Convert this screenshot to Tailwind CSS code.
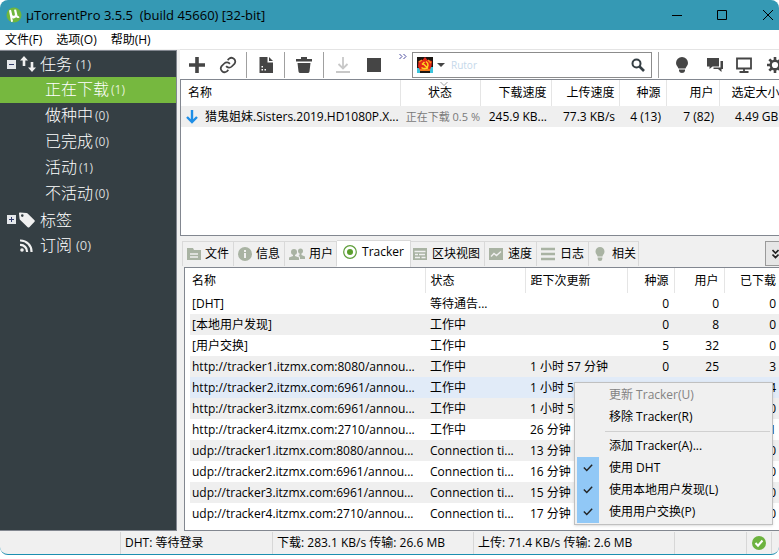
<!DOCTYPE html>
<html lang="zh-CN">

<head>
  <meta charset="UTF-8" />
  <meta name="viewport" content="width=device-width, initial-scale=1.0" />
  <title>μTorrentPro 3.5.5</title>
  <script src="https://cdn.jsdelivr.net/npm/@tailwindcss/browser@4"></script>
</head>
<body class="h-screen flex flex-col overflow-hidden bg-white pb-1 text-[12px] leading-5 text-black font-['Open_Sans','Noto_Sans_CJK_SC',sans-serif]">

  <!-- title bar -->
  <header class="h-[30px] shrink-0 flex items-center bg-[#3599b4] rounded-t-lg pl-1.5">
    <svg class="w-4 h-4 mr-1" viewBox="0 0 16 16">
      <circle cx="8" cy="8" r="7.5" fill="#6fb63c" />
      <path d="M3 3.500l2-.8 1.200 5c.4 1.700 3 1.300 2.700-.5L8 2.800l2.100-.3 1.400 6c.2.8.9.9 1.400.7l.6 1.200c-1.300.9-2.900.7-3.400-.4-1.100 1.700-3 1.700-3.900.9l.9 3.600-2 .4z" fill="#fff" />
    </svg>
    <h1 class="text-[13px] whitespace-pre">μTorrentPro 3.5.5  (build 45660) [32-bit]</h1>
    <div class="ml-auto flex">
      <button aria-label="最小化" class="w-[46px] h-[30px] flex items-center justify-center">
        <svg class="w-3 h-3" viewBox="0 0 12 12" fill="none" stroke="#000"><path d="M1 6.500h10" /></svg>
      </button>
      <button aria-label="最大化" class="w-11 h-[30px] flex items-center justify-center">
        <svg class="w-3 h-3" viewBox="0 0 12 12" fill="none" stroke="#000"><path d="M1.500 1.500h9v9h-9z" /></svg>
      </button>
      <button aria-label="关闭" class="w-[35px] h-[30px] flex items-center justify-end pr-[5px]">
        <svg class="w-3 h-3" viewBox="0 0 12 12" fill="none" stroke="#000"><path d="M1 1l10 10M11 1L1 11" /></svg>
      </button>
    </div>
  </header>

  <!-- menu bar -->
  <nav class="h-[19px] shrink-0 flex items-center gap-3.5 pl-[5px]">
    <button>文件(F)</button>
    <button>选项(O)</button>
    <button>帮助(H)</button>
  </nav>

  <div class="flex-1 min-h-0 flex bg-[#f0f0f0]">
    <!-- sidebar -->
    <aside class="w-[177px] shrink-0 bg-[#353f44] border-y border-r border-[#828790] mt-px text-white text-[16px]">
      <a href="#" class="flex items-center h-[26px] pl-[7px]">
        <svg class="w-[9px] h-[9px]" viewBox="0 0 9 9"><path d="M0 0h9v9H0z" fill="#e4e7ea" /><path d="M2 4.500h5" stroke="#333d6b" /></svg>
        <svg class="w-4 h-4 ml-1 mr-1" viewBox="0 0 16 16" fill="#f0f0f0"><path d="M4 0l4 4.500H5.300V10H2.700V4.500H0zM12 16l-4-4.500h2.700V6h2.600v5.500H16z" /></svg>
        <span class="font-light">任务</span><span class="ml-1 text-[13px] font-medium text-[#d6d9da]">(1)</span>
      </a>
      <a href="#" class="flex items-center h-[26px] pl-[45px] pb-[3px] bg-[#76b83f]"><span class="font-light">正在下载</span><span class="ml-0.5 mt-0.5 text-[12px] font-medium text-[#e2f0d4]">(1)</span></a>
      <a href="#" class="flex items-center h-[26px] pl-[45px] pb-[3px]"><span class="font-light">做种中</span><span class="ml-0.5 mt-0.5 text-[12px] font-medium text-[#d6d9da]">(0)</span></a>
      <a href="#" class="flex items-center h-[26px] pl-[45px] pb-[3px]"><span class="font-light">已完成</span><span class="ml-0.5 mt-0.5 text-[12px] font-medium text-[#d6d9da]">(0)</span></a>
      <a href="#" class="flex items-center h-[26px] pl-[45px] pb-[3px]"><span class="font-light">活动</span><span class="ml-0.5 mt-0.5 text-[12px] font-medium text-[#d6d9da]">(1)</span></a>
      <a href="#" class="flex items-center h-[26px] pl-[45px] pb-[3px]"><span class="font-light">不活动</span><span class="ml-0.5 mt-0.5 text-[12px] font-medium text-[#d6d9da]">(0)</span></a>
      <a href="#" class="flex items-center h-[25px] pl-[7px]">
        <svg class="w-[9px] h-[9px]" viewBox="0 0 9 9"><path d="M0 0h9v9H0z" fill="#e4e7ea" /><path d="M2 4.500h5M4.500 2v5" stroke="#333d6b" /></svg>
        <svg class="w-4 h-4 ml-[3px] mr-[5px]" viewBox="0 0 16 16" fill="#f0f0f0"><path fill-rule="evenodd" d="M1 .5l6.500.5c.6 0 1 .3 1.400.7l6.600 6.600c.5.5.5 1 0 1.500l-5.200 5.400c-.5.5-1.100.5-1.600 0L1.500 8.300C.8 7.700.6 7.200.5 6.500L0 1.500C0 .9.400.5 1 .5zM3.300 2.300a1.300 1.300 0 100 2.600 1.300 1.300 0 000-2.600z" /></svg>
        <span class="font-light">标签</span>
      </a>
      <a href="#" class="flex items-center h-[26px] pl-5">
        <svg class="w-[13px] h-[13px] mr-[7px]" viewBox="0 0 13 13" fill="none" stroke="#f0f0f0" stroke-width="2.200"><path d="M0 1.500A11 11 0 0111.500 13M0 6a6.500 6.500 0 017 7" /><circle cx="2" cy="11" r="1.800" fill="#f0f0f0" stroke="none" /></svg>
        <span class="font-light">订阅</span><span class="ml-1 text-[13px] font-medium text-[#d6d9da]">(0)</span>
      </a>
    </aside>

    <main class="flex-1 min-w-0 flex flex-col ml-[3px]">
      <!-- toolbar -->
      <div class="h-[30px] shrink-0 flex items-center bg-white border-t border-[#e4e4e4] overflow-hidden text-[#454545]">
        <button aria-label="添加" class="w-[33px] h-7 shrink-0 flex items-center justify-center">
          <svg class="w-4 h-4" viewBox="0 0 16 16" fill="currentColor"><path d="M6.200 0h3.600v6.200H16v3.600H9.800V16H6.200V9.800H0V6.200h6.200z" /></svg>
        </button>
        <button aria-label="链接" class="w-[30px] h-7 shrink-0 flex items-center justify-center">
          <svg class="w-[18px] h-[18px]" viewBox="0 0 24 24" fill="none" stroke="currentColor" stroke-width="2.300"><path d="M9.500 13.500a5 5 0 007.500.5l3.500-3.500a5 5 0 00-7-7L11.500 5.500M14.500 10.500a5 5 0 00-7.500-.5l-3.500 3.500a5 5 0 007 7l2-2" /></svg>
        </button>
        <span class="w-[7px] shrink-0 flex justify-center"><i class="w-px h-[26px] bg-[#a0a0a0]"></i></span>
        <button aria-label="创建种子" class="w-[31px] h-7 shrink-0 flex items-center justify-center">
          <svg class="w-4 h-4" viewBox="0 0 16 16" fill="currentColor"><path d="M1.500 0h8v5.500H15V16H1.500zM11 0l4 4h-4z" /><path d="M3.500 9h1.500v1.500H3.500zM3.500 12h1.500v1.500H3.500zM6.500 12H8v1.500H6.500z" fill="#fff" /></svg>
        </button>
        <span class="w-[7px] shrink-0 flex justify-center"><i class="w-px h-[26px] bg-[#a0a0a0]"></i></span>
        <button aria-label="删除" class="w-8 h-7 shrink-0 flex items-center justify-center">
          <svg class="w-4 h-4" viewBox="0 0 16 16" fill="currentColor"><path d="M5 0h6v2h5v2.500H0V2h5zM1.500 6h13L13.500 14.500q-.2 1.500-1.700 1.500H4.200q-1.500 0-1.700-1.500z" /></svg>
        </button>
        <span class="w-[7px] shrink-0 flex justify-center"><i class="w-px h-[26px] bg-[#a0a0a0]"></i></span>
        <button aria-label="开始" class="w-8 h-7 shrink-0 flex items-center justify-center text-[#c8c8c8]">
          <svg class="w-4 h-4" viewBox="0 0 16 16" fill="none" stroke="currentColor" stroke-width="1.800"><path d="M8 0v11M3.500 7L8 11.500 12.500 7M1 15h14" /></svg>
        </button>
        <button aria-label="停止" class="w-[29px] h-7 shrink-0 flex items-center justify-center"><i class="w-3.5 h-3.5 bg-[#454545]"></i></button>
        <button aria-label="更多" class="w-6 h-7 shrink-0 flex items-start justify-end pt-[3px] pr-[5px]">
          <svg class="w-2 h-[5px]" viewBox="0 0 8 5" fill="none" stroke="#4d4da0"><path d="M.5 0L3 2.500.5 5M4.500 0L7 2.500 4.500 5" /></svg>
        </button>
        <label class="flex-1 min-w-0 h-[26px] flex items-center border border-[#8c8c8c] bg-white pl-1 pr-1.5">
          <svg class="w-4 h-4 shrink-0" viewBox="0 0 16 16"><path d="M0 0h16v16H0z" fill="#1a1410" /><path d="M0 11h3v5H0zM13 10h3v6h-3z" fill="#3bc4dc" /><path d="M8 0l2.500 3L15 4l-.5 5-2 5H3.500L1 9.500 1.500 4l4-1z" fill="#e32718" /><path d="M2 5l3-2M11 3l3 3M3 13h10" stroke="#f7941d" stroke-width="1.500" /><path d="M9 4.500c3 2 2.500 6-.5 7-1.500.3-3 0-4-1M5.500 6L11 11.500M5 7.500L7.500 5" stroke="#ffd21f" stroke-width="1.500" fill="none" /></svg>
          <svg class="w-2 h-1 ml-1 shrink-0" viewBox="0 0 8 4"><path d="M0 0h8L4 4z" fill="#454545" /></svg>
          <input type="text" aria-label="搜索" placeholder="Rutor" class="flex-1 min-w-0 ml-1 px-0.5 outline-none text-[10px] placeholder:text-[#c5d8ea]" />
          <svg class="w-3.5 h-3.5 shrink-0" viewBox="0 0 14 14" fill="none" stroke="#353f44"><circle cx="5.500" cy="5.500" r="4" stroke-width="2" /><path d="M8.500 8.500l4.500 4.500" stroke-width="2.600" /></svg>
        </label>
        <span class="w-3 shrink-0 flex justify-center"><i class="w-px h-[26px] bg-[#a0a0a0]"></i></span>
        <button aria-label="提示" class="w-9 h-7 shrink-0 flex items-center justify-center">
          <svg class="w-3 h-4" viewBox="0 0 12 16" fill="currentColor"><path d="M6 0a6 6 0 016 6c0 2.500-2 3.500-2.500 5.500h-7C2 9.500 0 8.500 0 6a6 6 0 016-6zM3 12.500h6v1.500q-.5 2-3 2t-3-2z" /></svg>
        </button>
        <button aria-label="聊天" class="w-[30px] h-7 shrink-0 flex items-center justify-center">
          <svg class="w-4 h-4" viewBox="0 0 16 16" fill="currentColor"><path d="M0 1h12v8.500H5.500L2.500 12V9.500H0zM13.500 4H16v8h-1.500v3L11 12H6.500v-1.500h7z" /></svg>
        </button>
        <button aria-label="远程" class="w-7 h-7 shrink-0 flex items-center justify-center">
          <svg class="w-4 h-4" viewBox="0 0 16 16" fill="none" stroke="currentColor" stroke-width="1.800"><path d="M1 1.500h14v10H1zM3.500 15h9M8 12v3" /></svg>
        </button>
        <button aria-label="设置" class="w-[21px] h-7 shrink-0 flex items-center pl-[9px]">
          <svg class="w-4 h-4 shrink-0" viewBox="0 0 16 16" fill="none" stroke="currentColor"><circle cx="8" cy="8" r="4.300" stroke-width="2.400" /><path d="M8 0v3M8 13v3M0 8h3M13 8h3M2.300 2.300l2.200 2.200M11.500 11.500l2.200 2.200M2.300 13.700l2.200-2.200M11.500 4.500l2.200-2.200" stroke-width="2.600" /></svg>
        </button>
      </div>

      <!-- torrent list -->
      <section class="h-[157px] shrink-0 bg-white border-y border-l border-[#828790] overflow-hidden">
        <table class="w-full table-fixed whitespace-nowrap text-right">
          <colgroup><col class="w-[219px]" /><col class="w-20" /><col class="w-[71px]" /><col class="w-[68px]" /><col class="w-[47px]" /><col class="w-[53px]" /><col /></colgroup>
          <thead>
            <tr class="h-[26px]">
              <th class="font-normal text-left pl-[7px] border-r border-[#e5e5e5]">名称</th>
              <th class="relative font-normal text-center border-r border-[#e5e5e5]">
                <svg class="absolute top-0.5 left-1/2 w-2 h-1" viewBox="0 0 8 4" fill="none" stroke="#a0a0a0"><path d="M.5 0L4 3.500 7.500 0" /></svg>状态</th>
              <th class="font-normal pr-1 border-r border-[#e5e5e5]">下载速度</th>
              <th class="font-normal pr-1 border-r border-[#e5e5e5]">上传速度</th>
              <th class="font-normal pr-[5px] border-r border-[#e5e5e5]">种源</th>
              <th class="font-normal pr-[5px] border-r border-[#e5e5e5]">用户</th>
              <th class="font-normal text-left pl-3">选定大小</th>
            </tr>
          </thead>
          <tbody>
            <tr class="h-[21px] bg-[#efefef]">
              <td class="text-left pl-[5px]">
                <div class="flex items-center">
                  <svg class="w-3 h-3.5 mr-[7px] shrink-0" viewBox="0 0 12 14" fill="none" stroke="#1e8ee6" stroke-width="2.400"><path d="M6 0v12M1 7l5 5 5-5" /></svg>猎鬼姐妹.Sisters.2019.HD1080P.X...
                </div>
              </td>
              <td class="text-[11px] text-[#7a7a7a]">正在下载 0.5 %</td>
              <td class="pr-1">245.9 KB...</td>
              <td class="pr-1">77.3 KB/s</td>
              <td class="pr-[5px]">4 (13)</td>
              <td class="pr-[5px]">7 (82)</td>
              <td class="text-left pl-4">4.49 GB</td>
            </tr>
          </tbody>
        </table>
      </section>

      <!-- detail tabs -->
      <div class="h-[31px] shrink-0 flex items-end pl-0.5 pb-px pt-1">
        <button class="h-[25px] flex items-center gap-1 px-1 border-x border-t border-[#d9d9d9]">
          <svg class="w-3.5 h-3.5" viewBox="0 0 14 14" fill="#a9b3a3"><path d="M0 1h6l1 2h7v10H0z" /><path d="M3 7h8M3 10h8" stroke="#f0f0f0" stroke-width="1.300" /></svg>文件
        </button>
        <button class="h-[25px] flex items-center gap-1 px-1 border-r border-t border-[#d9d9d9]">
          <svg class="w-3.5 h-3.5" viewBox="0 0 14 14"><circle cx="7" cy="7" r="7" fill="#a9b3a3" /><path d="M7 3v2M7 6v5" stroke="#f0f0f0" stroke-width="2" /></svg>信息
        </button>
        <button class="h-[25px] flex items-center gap-1 pl-1 pr-[3px] border-r border-t border-[#d9d9d9]">
          <svg class="w-4 h-3.5" viewBox="0 0 16 14" fill="#a9b3a3"><circle cx="5" cy="5" r="3" /><path d="M4 7h2v2l4 1.500V13H0v-2.500L4 9z" /><circle cx="11.500" cy="4" r="2.500" /><path d="M10.500 6h2v2l3.500 1.500V12h-5V9.700L9.500 9l1-1z" /></svg>用户
        </button>
        <button class="h-[27px] -mb-px pb-1 flex items-center gap-[5px] px-1.5 bg-white border-r border-t border-[#d9d9d9]">
          <svg class="w-3.5 h-3.5" viewBox="0 0 14 14"><circle cx="7" cy="7" r="6.300" fill="#fff" stroke="#5f9e3a" stroke-width="1.200" /><circle cx="7" cy="7" r="3" fill="#5a9e2c" /></svg>Tracker
        </button>
        <button class="h-[25px] flex items-center gap-[5px] pl-0.5 pr-1 border-r border-t border-[#d9d9d9]">
          <svg class="w-3.5 h-3.5" viewBox="0 0 14 14"><path d="M0 1h14v12H0z" fill="#a9b3a3" /><path d="M1.500 4.500h11M2 7.500h3M6 7.500h6M2 10.500h5M8.500 10.500h4" stroke="#f0f0f0" stroke-width="1.500" /></svg>区块视图
        </button>
        <button class="h-[25px] flex items-center gap-[5px] px-1 border-r border-t border-[#d9d9d9]">
          <svg class="w-3.5 h-3.5" viewBox="0 0 14 14"><path d="M0 1h14v12H0z" fill="#a9b3a3" /><path d="M2 9.500l3-3 2.500 2L12 4.500" stroke="#f0f0f0" stroke-width="1.400" fill="none" /></svg>速度
        </button>
        <button class="h-[25px] flex items-center gap-[5px] px-1 border-r border-t border-[#d9d9d9]">
          <svg class="w-3.5 h-3.5" viewBox="0 0 14 14" stroke="#a9b3a3" stroke-width="2.400"><path d="M0 2h14M0 7h14M0 12h14" /></svg>日志
        </button>
        <button class="h-[25px] flex items-center gap-[5px] pl-1 pr-0.5 border-r border-t border-[#d9d9d9]">
          <svg class="w-3.5 h-3.5" viewBox="0 0 14 14" fill="#a9b3a3"><path d="M7 0a4.500 4.500 0 014.500 4.500C11.500 7 9.700 7.500 9.500 9.500h-5C4.300 7.500 2.500 7 2.500 4.500A4.500 4.500 0 017 0zM4.700 10.500h4.600V12q0 2-2.300 2t-2.300-2z" /></svg>相关
        </button>
        <button aria-label="折叠" class="ml-auto w-3.5 h-[25px] shrink-0 flex items-center justify-end overflow-hidden bg-[#e6e6e6] border-y border-l border-[#9a9a9a]">
          <svg class="w-[7px] h-2.5 shrink-0" viewBox="0 0 7 10" fill="none" stroke="#222" stroke-width="1.600"><path d="M.5 1l3 3 3-3M.5 5.500l3 3 3-3" /></svg>
        </button>
      </div>

      <!-- tracker list -->
      <section class="relative flex-1 min-h-0 ml-1 bg-white border-y border-l border-[#828790] pl-[5px]">
        <table class="w-full table-fixed whitespace-nowrap">
          <colgroup><col class="w-[235px]" /><col class="w-[100px]" /><col class="w-[102px]" /><col class="w-[47px]" /><col class="w-[50px]" /><col /></colgroup>
          <thead>
            <tr class="h-[25px]">
              <th class="font-normal text-left pl-0.5 border-r border-[#e5e5e5]">名称</th>
              <th class="font-normal text-left pl-[5px] border-r border-[#e5e5e5]">状态</th>
              <th class="font-normal text-left pl-[5px] border-r border-[#e5e5e5]">距下次更新</th>
              <th class="font-normal text-right pr-[5px] border-r border-[#e5e5e5]">种源</th>
              <th class="font-normal text-right pr-[5px] border-r border-[#e5e5e5]">用户</th>
              <th class="font-normal text-right pr-[3px]">已下载</th>
            </tr>
          </thead>
          <tbody id="trackerRows"></tbody>
        </table>

        <!-- context menu -->
        <div class="absolute top-[114px] left-[389px] w-[199px] bg-[#f0f0f0] border border-[#c0c0c0] py-px px-0.5 shadow-sm">
          <button disabled class="w-full h-[22px] flex items-center pl-8 text-[#838383]">更新 Tracker(U)</button>
          <button class="w-full h-[22px] flex items-center pl-8">移除 Tracker(R)</button>
          <hr class="my-[3px] ml-7 border-[#d0d0d0]" />
          <button class="w-full h-[22px] flex items-center pl-8">添加 Tracker(A)...</button>
          <button class="w-full h-[22px] flex items-center gap-2.5">
            <span class="w-[22px] h-full bg-[#91c8f6] flex items-center justify-center"><svg class="w-2.5 h-2.5" viewBox="0 0 12 10" fill="none" stroke="#222" stroke-width="1.700"><path d="M1 4.500L4.500 8 11 1" /></svg></span>使用 DHT
          </button>
          <button class="w-full h-[22px] flex items-center gap-2.5">
            <span class="w-[22px] h-full bg-[#91c8f6] flex items-center justify-center"><svg class="w-2.5 h-2.5" viewBox="0 0 12 10" fill="none" stroke="#222" stroke-width="1.700"><path d="M1 4.500L4.500 8 11 1" /></svg></span>使用本地用户发现(L)
          </button>
          <button class="w-full h-[22px] flex items-center gap-2.5">
            <span class="w-[22px] h-full bg-[#91c8f6] flex items-center justify-center"><svg class="w-2.5 h-2.5" viewBox="0 0 12 10" fill="none" stroke="#222" stroke-width="1.700"><path d="M1 4.500L4.500 8 11 1" /></svg></span>使用用户交换(P)
          </button>
        </div>
      </section>
    </main>
  </div>

  <!-- status bar -->
  <footer class="h-6 shrink-0 flex items-end bg-[#f0f0f0] border-b border-[#1c8fb0] whitespace-nowrap rounded-b-lg">
    <span class="w-[121px] h-[22px] shrink-0 border-r border-[#d7d7d7]"></span>
    <span class="w-[152px] h-[22px] shrink-0 border-r border-[#d7d7d7] pl-1 pt-px">DHT: 等待登录</span>
    <span class="w-[201px] h-[22px] shrink-0 border-r border-[#d7d7d7] pl-1 pt-px">下载: 283.1 KB/s 传输: 26.6 MB</span>
    <span class="w-[201px] h-[22px] shrink-0 border-r border-[#d7d7d7] pl-1 pt-px">上传: 71.4 KB/s 传输: 2.6 MB</span>
    <span class="flex-1 h-[22px] border-r border-[#d7d7d7]"></span>
    <span class="w-[25px] h-[22px] shrink-0 flex items-center justify-center border-r border-[#d7d7d7] mr-[7px]">
      <svg class="w-3.5 h-3.5" viewBox="0 0 14 14" fill="none"><circle cx="7" cy="7" r="7" fill="#6db33f" /><path d="M3.500 7L6 9.700 10.500 4.500" stroke="#fff" stroke-width="2" /></svg>
    </span>
  </footer>

  <script>
    const trackers = [
      ['[DHT]', '等待通告...', '', 0, 0, 0],
      ['[本地用户发现]', '工作中', '', 0, 8, 0],
      ['[用户交换]', '工作中', '', 5, 32, 0],
      ['http://tracker1.itzmx.com:8080/annou...', '工作中', '1 小时 57 分钟', 0, 25, 3],
      ['http://tracker2.itzmx.com:6961/annou...', '工作中', '1 小时 5', '', '', 4],
      ['http://tracker3.itzmx.com:6961/annou...', '工作中', '1 小时 5', '', '', 0],
      ['http://tracker4.itzmx.com:2710/annou...', '工作中', '26 分钟', '', '', 1],
      ['udp://tracker1.itzmx.com:8080/annou...', 'Connection ti...', '13 分钟', '', '', 0],
      ['udp://tracker2.itzmx.com:6961/annou...', 'Connection ti...', '16 分钟', '', '', 0],
      ['udp://tracker3.itzmx.com:6961/annou...', 'Connection ti...', '15 分钟', '', '', 0],
      ['udp://tracker4.itzmx.com:2710/annou...', 'Connection ti...', '17 分钟', '', '', 0]
    ];
    const selected = 4;

    document.getElementById('trackerRows').innerHTML = trackers.map((t, i) => `
      <tr class="h-[21px] ${i === selected ? 'bg-[#e1ebf8]' : i % 2 ? 'bg-[#efefef]' : 'bg-white'}">
        <td class="pl-0.5">${t[0]}</td>
        <td class="pl-[5px]">${t[1]}</td>
        <td class="pl-[5px]">${t[2]}</td>
        <td class="text-right pr-[5px]">${t[3]}</td>
        <td class="text-right pr-[5px]">${t[4]}</td>
        <td class="text-right pr-[3px]">${t[5]}</td>
      </tr>
    `).join('');
  </script>
</body>
</html>
